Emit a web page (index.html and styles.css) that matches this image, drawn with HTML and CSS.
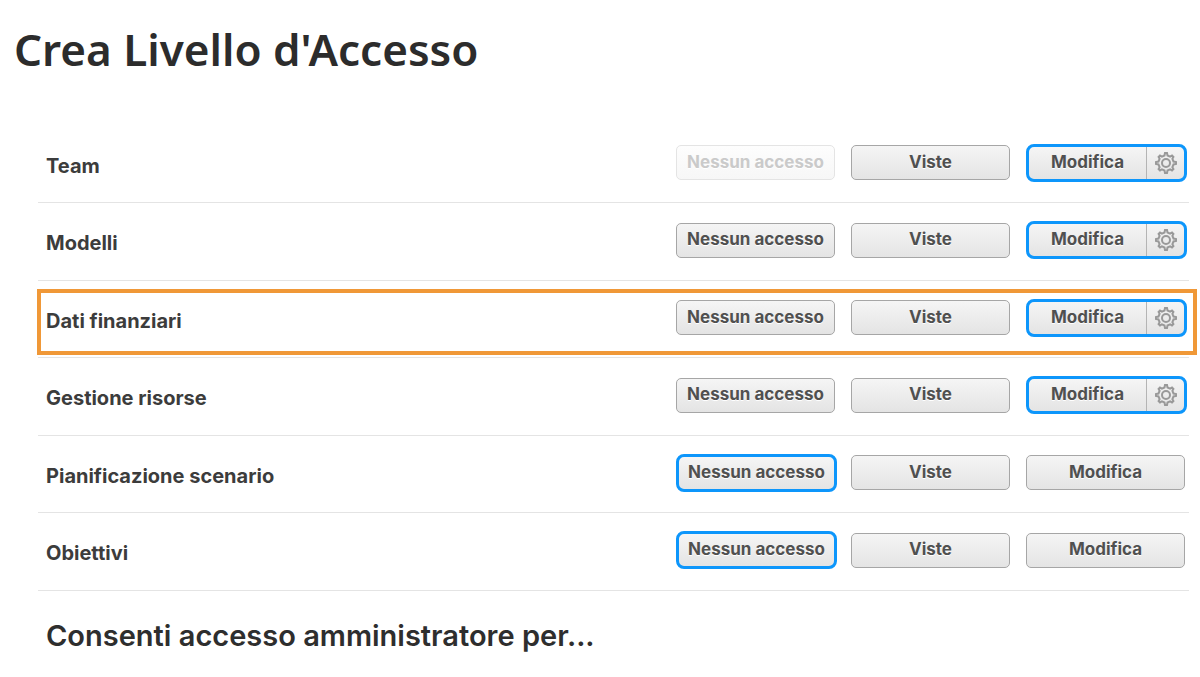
FILE: index.html
```
<!DOCTYPE html>
<html lang="it">
<head>
<meta charset="utf-8">
<meta name="viewport" content="width=device-width, initial-scale=1">
<title>Crea Livello d'Accesso</title>
<link rel="stylesheet" href="styles.css">
</head>
<body>
<svg class="symbols" aria-hidden="true">
  <symbol id="gear" viewBox="0 0 24 24">
    <path d="M10.5 4.5 11 2h2l.5 2.5 2.6 1.1L18 4.6 19.4 6l-1 1.9 1.1 2.6L22 11v2l-2.5.5-1.1 2.6 1 1.9-1.4 1.4-1.9-1-2.6 1.1L13 22h-2l-.5-2.5-2.6-1.1-1.9 1L4.600 18l1-1.900-1.100-2.600L2 13v-2l2.500-.5 1.100-2.600-1-1.900L6 4.600l1.900 1z"/>
    <circle cx="12" cy="12" r="4"/>
  </symbol>
</svg>
<main class="page">
  <h1 class="title">Crea Livello d'Accesso</h1>
  <ul class="levels">
    <li class="level">
      <span class="name" id="team">Team</span>
      <div class="options" role="group" aria-labelledby="team">
        <button class="option" type="button" disabled>Nessun accesso</button>
        <button class="option" type="button">Viste</button>
        <div class="split"><button class="split-main" type="button" aria-pressed="true">Modifica</button><button class="split-gear" type="button" aria-label="Impostazioni"><svg class="gear"><use href="#gear"/></svg></button></div>
      </div>
    </li>
    <li class="level">
      <span class="name" id="modelli">Modelli</span>
      <div class="options" role="group" aria-labelledby="modelli">
        <button class="option" type="button">Nessun accesso</button>
        <button class="option" type="button">Viste</button>
        <div class="split"><button class="split-main" type="button" aria-pressed="true">Modifica</button><button class="split-gear" type="button" aria-label="Impostazioni"><svg class="gear"><use href="#gear"/></svg></button></div>
      </div>
    </li>
    <li class="level highlighted">
      <span class="name" id="dati">Dati finanziari</span>
      <div class="options" role="group" aria-labelledby="dati">
        <button class="option" type="button">Nessun accesso</button>
        <button class="option" type="button">Viste</button>
        <div class="split"><button class="split-main" type="button" aria-pressed="true">Modifica</button><button class="split-gear" type="button" aria-label="Impostazioni"><svg class="gear"><use href="#gear"/></svg></button></div>
      </div>
    </li>
    <li class="level">
      <span class="name" id="risorse">Gestione risorse</span>
      <div class="options" role="group" aria-labelledby="risorse">
        <button class="option" type="button">Nessun accesso</button>
        <button class="option" type="button">Viste</button>
        <div class="split"><button class="split-main" type="button" aria-pressed="true">Modifica</button><button class="split-gear" type="button" aria-label="Impostazioni"><svg class="gear"><use href="#gear"/></svg></button></div>
      </div>
    </li>
    <li class="level">
      <span class="name" id="scenario">Pianificazione scenario</span>
      <div class="options" role="group" aria-labelledby="scenario">
        <button class="option selected" type="button" aria-pressed="true">Nessun accesso</button>
        <button class="option" type="button">Viste</button>
        <button class="option" type="button">Modifica</button>
      </div>
    </li>
    <li class="level">
      <span class="name" id="obiettivi">Obiettivi</span>
      <div class="options" role="group" aria-labelledby="obiettivi">
        <button class="option selected" type="button" aria-pressed="true">Nessun accesso</button>
        <button class="option" type="button">Viste</button>
        <button class="option" type="button">Modifica</button>
      </div>
    </li>
  </ul>
  <h2 class="subtitle">Consenti accesso amministratore per...</h2>
</main>
</body>
</html>
```
FILE: styles.css
```
* {
  box-sizing: border-box;
}

body {
  margin: 0;
  background: #fff;
  color: #3c3c3c;
  font-family: Inter, "Liberation Sans", sans-serif;
}

.symbols {
  display: none;
}

.page {
  padding: 19px 11px 20px 38px;
}

.title {
  margin: 0 0 47px -24px;
  color: #2c2c2c;
  font: 600 44px/60px "Noto Sans", sans-serif;
}

.levels {
  margin: 0;
  padding: 0;
  list-style: none;
}

.level {
  position: relative;
  display: flex;
  align-items: center;
  justify-content: space-between;
  min-height: 77px;
  padding-left: 8px;
  border-bottom: 1px solid #e4e4e4;
}

.level:nth-child(even) {
  min-height: 78px;
}

.highlighted::after {
  content: "";
  position: absolute;
  inset: 8px -8px 2px -1px;
  border: 4px solid #f09837;
  pointer-events: none;
}

.name {
  padding-top: 3px;
  font-size: 20px;
  font-weight: 700;
  line-height: 28px;
}

.options {
  display: grid;
  grid-template-columns: repeat(3, 163px);
  gap: 12px;
  align-items: center;
  padding-bottom: 3px;
}

.option {
  width: 159px;
  height: 35px;
  padding: 0 0 2px;
  border: 1px solid #a6a6a6;
  border-radius: 5px;
  background: linear-gradient(#f5f5f5, #e4e4e4);
  color: #505050;
  font: 700 17px/24px Inter, "Liberation Sans", sans-serif;
  text-shadow: 0 1px 0 #fff;
  white-space: nowrap;
}

.option:disabled {
  border-color: #e4e4e4;
  background: linear-gradient(#fdfdfd, #f7f7f7);
  color: #cacaca;
}

.selected,
.split {
  width: 161px;
  height: 38px;
  border: 3px solid #0d96fb;
  border-radius: 8px;
}

.split {
  display: flex;
  background: linear-gradient(#f5f5f5, #e4e4e4);
}

.split-main,
.split-gear {
  padding: 0;
  border: 0;
  background: none;
  color: #505050;
}

.split-main {
  flex: 1;
  padding-bottom: 2px;
  font: 700 17px/24px Inter, "Liberation Sans", sans-serif;
  text-shadow: 0 1px 0 #fff;
}

.split-gear {
  display: flex;
  align-items: center;
  justify-content: center;
  width: 38px;
  border-left: 1px solid #b4b4b4;
}

.gear {
  width: 24px;
  height: 24px;
  fill: none;
  stroke: #999;
  stroke-width: 2;
}

.subtitle {
  margin: 25px 0 0 8px;
  color: #2e2e2e;
  font-size: 29px;
  font-weight: 600;
  line-height: 40px;
}
```
